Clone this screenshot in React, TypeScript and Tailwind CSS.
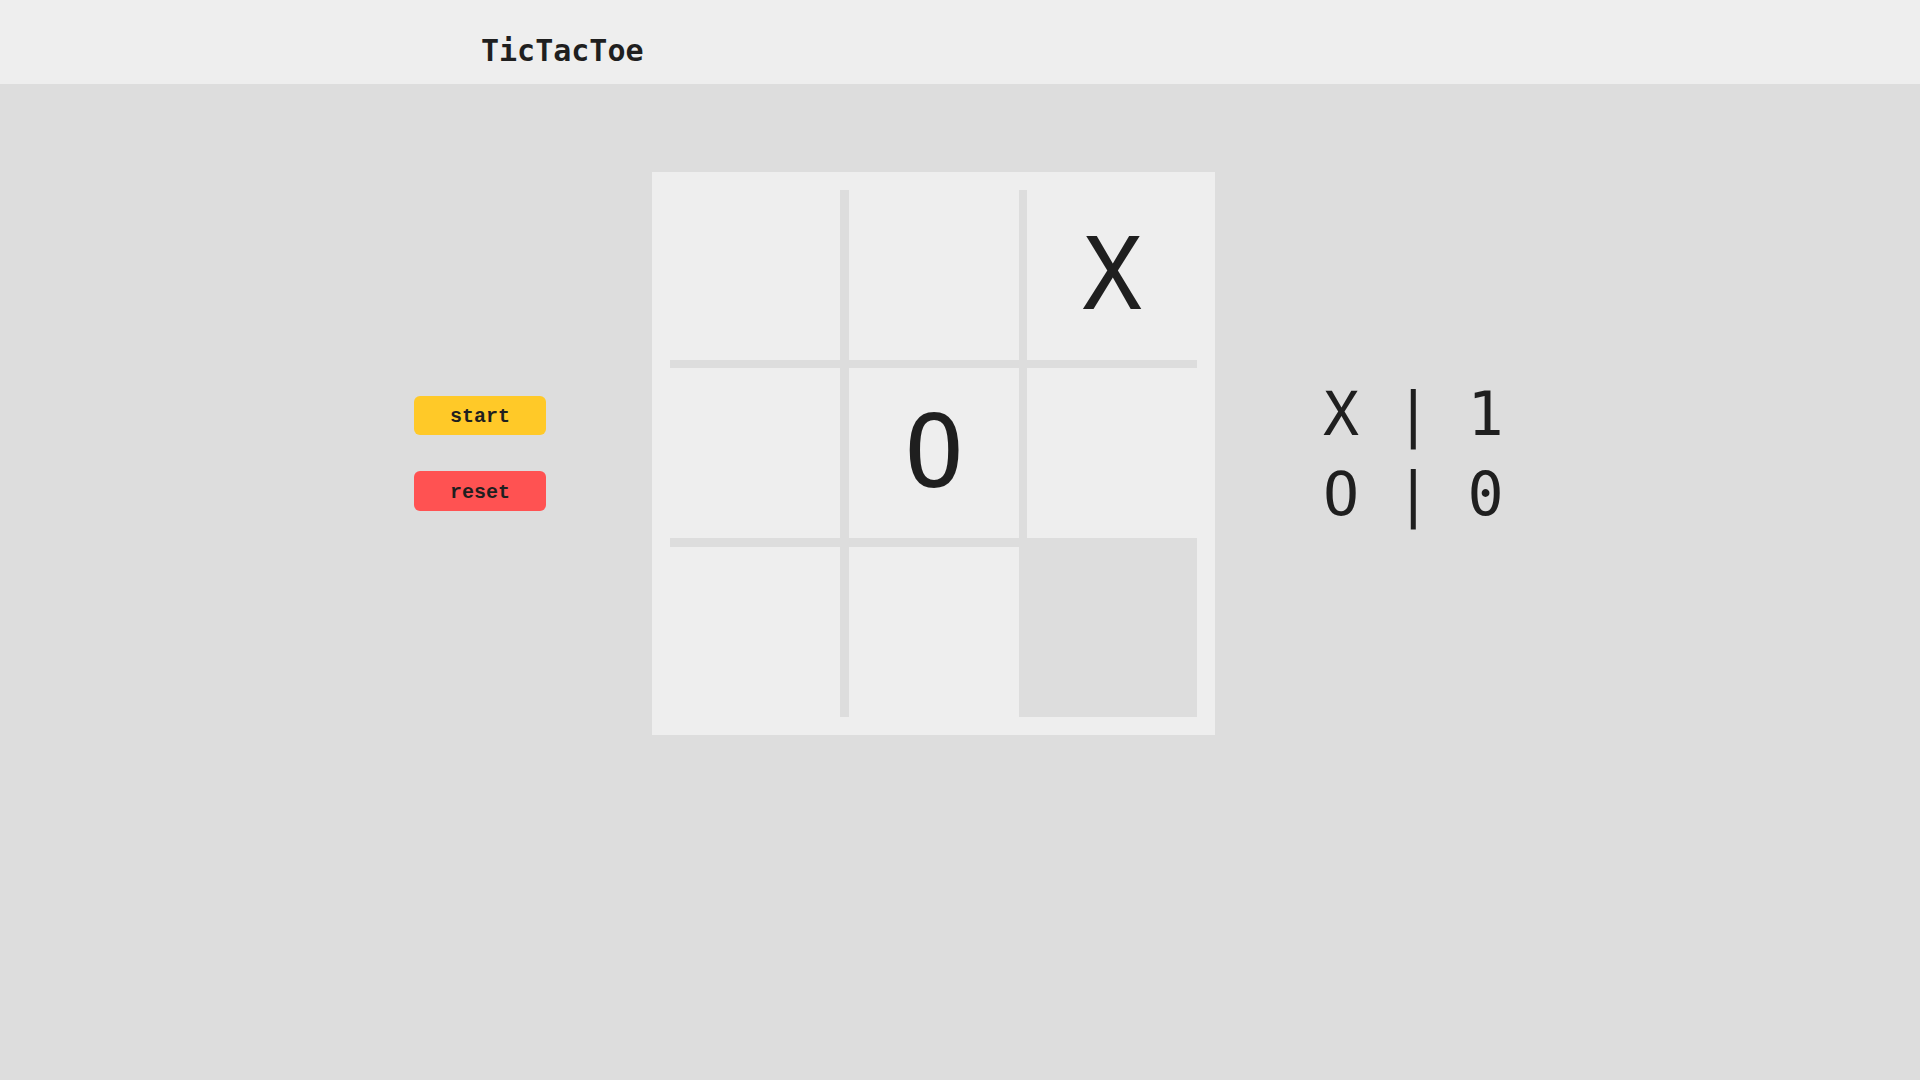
import { useState } from "react";

type Mark = "X" | "O" | null;

const colWidth = ["w-[170px]", "w-[179px]", "w-[178px]"];
const rowHeight = ["h-[170px]", "h-[178px]", "h-[179px]"];
const colBorder = ["", "border-l-[9px]", "border-l-[8px]"];
const rowBorder = ["", "border-t-[8px]", "border-t-[9px]"];

export default function App() {
  const [cells, setCells] = useState<Mark[]>([null, null, "X", null, "O", null, null, null, null]);
  const [hover] = useState(8);
  const [score] = useState({ x: 1, o: 0 });

  const play = (i: number) => {
    if (cells[i]) return;
    const next = [...cells];
    next[i] = cells.filter(Boolean).length % 2 === 0 ? "X" : "O";
    setCells(next);
  };

  return (
    <div className="min-h-screen w-full bg-[#dddddd] text-[#1f1f1f]">
      <header className="h-[84px] bg-[#eeeeee] pl-[481px] pt-[36px]">
        <h1 className="font-['DejaVu_Sans_Mono',monospace] text-[30px] leading-[30px] font-bold tracking-normal">
          TicTacToe
        </h1>
      </header>

      <main className="flex items-center pt-[88px] pl-[414px]">
        <div className="flex w-[132px] flex-col gap-[36px]">
          <button className="h-[39px] rounded-[6px] bg-[#ffc928] pt-[3px] font-['Liberation_Mono',monospace] text-[20px] font-bold leading-none">
            start
          </button>
          <button
            onClick={() => setCells([null, null, null, null, null, null, null, null, null])}
            className="h-[40px] rounded-[6px] bg-[#ff5252] pt-[3px] font-['Liberation_Mono',monospace] text-[20px] font-bold leading-none"
          >
            reset
          </button>
        </div>

        <div className="ml-[106px] h-[563px] w-[563px] bg-[#eeeeee] p-[18px]">
          <div className="flex flex-col">
            {[0, 1, 2].map((r) => (
              <div key={r} className="flex">
                {[0, 1, 2].map((c) => {
                  const i = r * 3 + c;
                  return (
                    <div
                      key={c}
                      onClick={() => play(i)}
                      className={`${colWidth[c]} ${rowHeight[r]} ${colBorder[c]} ${rowBorder[r]} flex items-center justify-center border-[#dddddd] ${
                        hover === i ? "bg-[#dddddd]" : "bg-[#eeeeee]"
                      } font-['DejaVu_Sans_Mono',monospace] text-[100px] leading-none`}
                    >
                      {cells[i]}
                    </div>
                  );
                })}
              </div>
            ))}
          </div>
        </div>

        <div className="ml-[108px] whitespace-pre font-['DejaVu_Sans_Mono',monospace] text-[60px] leading-[80px]">
          <div>X | {score.x}</div>
          <div>O | {score.o}</div>
        </div>
      </main>
    </div>
  );
}
